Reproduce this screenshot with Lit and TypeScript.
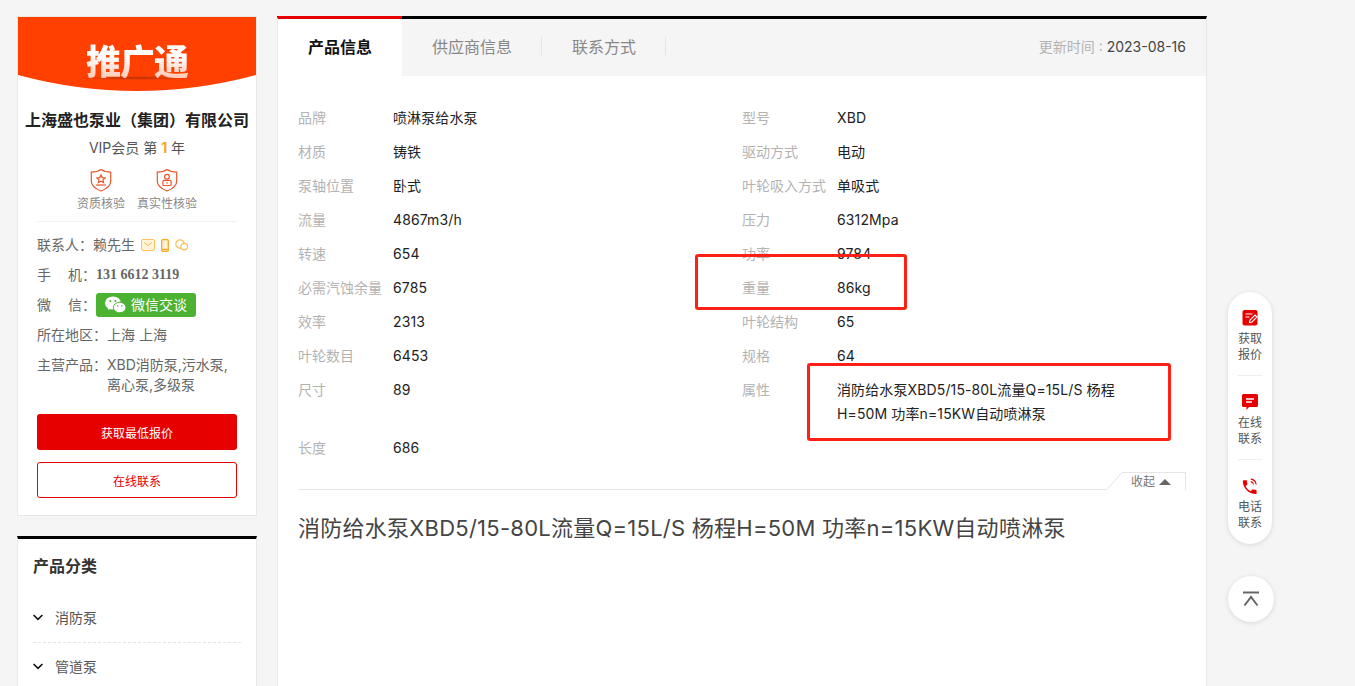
import { LitElement, html, css, svg } from "lit";
import { customElement } from "lit/decorators.js";

const specs: [string, string][] = [
  ["品牌", "喷淋泵给水泵"], ["型号", "XBD"],
  ["材质", "铸铁"], ["驱动方式", "电动"],
  ["泵轴位置", "卧式"], ["叶轮吸入方式", "单吸式"],
  ["流量", "4867m3/h"], ["压力", "6312Mpa"],
  ["转速", "654"], ["功率", "9784"],
  ["必需汽蚀余量", "6785"], ["重量", "86kg"],
  ["效率", "2313"], ["叶轮结构", "65"],
  ["叶轮数目", "6453"], ["规格", "64"],
  ["尺寸", "89"], ["属性", "消防给水泵XBD5/15-80L流量Q=15L/S 杨程 H=50M 功率n=15KW自动喷淋泵"],
  ["长度", "686"], ["", ""],
];

const shield = (inner: unknown) => html`<svg class="shield" viewBox="0 0 24 26" fill="none" stroke="#e8552a" stroke-width="1.3">
  <path d="M12 1.5 C15 3.6 19 4.4 22.6 4.4 V14 C22.6 19.5 17 23 12 25 C7 23 1.4 19.5 1.4 14 V4.4 C5 4.4 9 3.6 12 1.5Z"/>${inner}</svg>`;

@customElement("app-root")
export class AppRoot extends LitElement {
  static styles = css`
    :host { display: block; position: relative; width: 1355px; height: 686px; overflow: hidden; background: #f5f5f5;
      font-family: "Noto Sans CJK SC", "Inter", sans-serif; color: #333; font-size: 14px; }
    .page { display: flex; gap: 20px; padding: 16px 0 0 17px; align-items: flex-start; font-family: "Inter", "Noto Sans CJK SC", sans-serif; }
    .left { width: 240px; flex: none; }
    .card { box-sizing: border-box; background: #fff; border: 1px solid #e8e8e8; }
    .company { height: 500px; }
    .banner { height: 74px; background: radial-gradient(ellipse 60px 2px at 119px 61px, rgba(150,40,0,.65), transparent), #ff4000; clip-path: path("M0 0H238V58Q119 90 0 58Z"); display: flex; justify-content: center; }
    .logo { font-family: "Noto Sans CJK SC", sans-serif; font-size: 35px; font-weight: 900; line-height: 36px; margin-top: 25px; letter-spacing: -1px; height: 36px;
      background: linear-gradient(#fff 40%, #ffc9b5); -webkit-background-clip: text; background-clip: text; color: transparent; }
    .name { margin-top: 17px; text-align: center; font-size: 16px; font-weight: 700; line-height: 24px; color: #222; white-space: nowrap; }
    .vip { margin-top: 6px; text-align: center; line-height: 20px; color: #555; }
    .vip b { color: #f5a623; font-weight: 700; }
    .checks { display: flex; justify-content: center; gap: 12px; margin-top: 10px; }
    .check { display: flex; flex-direction: column; align-items: center; gap: 4px; font-size: 12px; line-height: 16px; color: #888; }
    .shield { width: 22px; height: 24px; display: block; }
    .info { margin: 9px 19px 0; border-top: 1px solid #f2f2f2; padding-top: 8px; }
    .row { display: flex; padding: 5px 0; line-height: 20px; color: #666; font-size: 14px; }
    .row .k { flex: none; width: 70px; }
    .row .k.short { width: 56px; }
    .row .k2 { flex: none; width: 59px; display: flex; justify-content: space-between; }
    .mini { display: flex; align-items: center; gap: 6px; margin-left: 6px; }
    .mobile { font-family: "Liberation Serif", serif; font-weight: 700; font-size: 14px; color: #666; }
    .wx { display: flex; align-items: center; width: 100px; height: 24px; margin: -2px 0; background: #4cb232; border-radius: 3px; color: #fff; gap: 5px; padding-left: 9px; box-sizing: border-box; font-size: 14px; }
    .btn { margin: 0 19px; height: 36px; box-sizing: border-box; border-radius: 3px; font-size: 12px; display: flex; align-items: center; justify-content: center; }
    .btn.solid { margin-top: 14px; background: #e60000; color: #fff; }
    .btn.line { margin-top: 12px; border: 1px solid #e60000; color: #e60000; background: #fff; }
    .cats { margin-top: 20px; border-top: 3px solid #000; padding: 15px 15px 0; height: 200px; }
    .cats h3 { margin: 0 0 16px; font-size: 16px; font-weight: 700; line-height: 24px; color: #333; }
    .cat { display: flex; align-items: center; gap: 12px; height: 46px; padding-bottom: 2px; border-bottom: 1px dashed #e5e5e5; color: #555; font-size: 14px; }
    .cat svg { width: 10px; height: 7px; flex: none; }
    .main { width: 930px; height: 680px; flex: none; background: #fff; border-top: 3px solid #000; border-left: 1px solid #e8e8e8; border-right: 1px solid #e8e8e8; box-sizing: border-box; }
    .tabs { display: flex; align-items: center; height: 57px; background: #f5f5f5; padding-right: 20px; font-size: 16px; color: #888; font-family: "Noto Sans CJK SC", sans-serif; }
    .tab { display: flex; align-items: center; padding-left: 30px; margin-top: -3px; }
    .tab span { display: block; line-height: 18px; padding-right: 29px; border-right: 1px solid #e5e5e5; }
    .tab.on { box-sizing: border-box; width: 124px; height: 60px; margin-top: -3px; padding-bottom: 4px; border-top: 3px solid #e60000; background: #fff; color: #111; font-weight: 700; }
    .tab.on span { border: 0; padding: 0; }
    .time { margin-left: auto; margin-top: -3px; font-size: 14px; color: #b3b3b3; font-family: "Inter", "Noto Sans CJK SC", sans-serif; }
    .time em { font-style: normal; color: #444; }
    .body { padding: 25px 20px 0; }
    .grid { display: grid; grid-template-columns: 444px 444px; }
    .spec { display: flex; padding: 5px 0; line-height: 24px; }
    .spec .l { flex: none; width: 95px; color: #b3b3b3; white-space: nowrap; }
    .spec .val { width: 300px; color: #222; font-size: 14px; letter-spacing: .12px; }
    .fold { display: flex; align-items: flex-end; height: 18px; margin-top: 7px; }
    .fold .rule { flex: 1; border-bottom: 1px solid #e5e5e5; }
    .fold svg.cut { width: 15px; height: 18px; display: block; flex: none; }
    .fold .tag { box-sizing: border-box; width: 64px; height: 18px; border-top: 1px solid #e5e5e5; border-right: 1px solid #e5e5e5; font-size: 12px; line-height: 17px; color: #777; padding-left: 9px; display: flex; align-items: center; gap: 4px; }
    .tri { width: 0; height: 0; border-left: 6px solid transparent; border-right: 6px solid transparent; border-bottom: 6px solid #666; }
    h1 { margin: 21px 0 0; font-size: 22px; font-weight: 400; line-height: 34px; color: #444; white-space: nowrap; letter-spacing: .25px; }
    .mark { position: absolute; box-sizing: border-box; border: 3px solid #ff2015; border-radius: 3px; pointer-events: none; }
    .m1 { left: 695px; top: 254px; width: 212px; height: 56px; }
    .m2 { left: 807px; top: 363px; width: 364px; height: 78px; }
    .float { position: absolute; left: 1228px; top: 292px; width: 44px; height: 252px; box-sizing: border-box; background: #fff; border-radius: 22px; box-shadow: 0 1px 5px rgba(0,0,0,.12); padding: 0 10px; font-size: 12px; line-height: 16px; color: #555; text-align: center; }
    .fitem { height: 84px; box-sizing: border-box; padding-top: 18px; border-bottom: 1px solid #eee; }
    .fitem:last-child { border: 0; }
    .fitem svg { display: block; width: 18px; height: 16px; margin: 0 auto 4px; }
    .top { position: absolute; left: 1228px; top: 576px; width: 46px; height: 46px; border-radius: 50%; background: #fff; box-shadow: 0 1px 5px rgba(0,0,0,.12); display: flex; align-items: center; justify-content: center; }
    .top svg { width: 18px; height: 16px; }
  `;

  private specTemplate([l, v]: [string, string]) {
    return html`<div class="spec"><div class="l">${l}</div><div class="val">${v}</div></div>`;
  }

  render() {
    return html`
      <div class="page">
        <div class="left">
          <div class="card company">
            <div class="banner"><div class="logo">推广通</div></div>
            <div class="name">上海盛也泵业（集团）有限公司</div>
            <div class="vip">VIP会员 第 <b>1</b> 年</div>
            <div class="checks">
              <div class="check">
                ${shield(svg`<path d="M12 7.5l1.4 2.9 3.1.4-2.3 2.1.6 3-2.8-1.5-2.8 1.500.6-3-2.3-2.1 3.1-.4Z"/><path d="M6.5 18.5h11"/>`)}
                资质核验
              </div>
              <div class="check">
                ${shield(svg`<circle cx="12" cy="9.5" r="2.6"/><rect x="7.500" y="13.5" width="9" height="5.5" rx="1"/><path d="M12 15.5v1.5"/>`)}
                真实性核验
              </div>
            </div>
            <div class="info">
              <div class="row"><div class="k short">联系人：</div><div>赖先生</div>
                <div class="mini">
                  <svg width="14" height="12" viewBox="0 0 14 12" fill="#fff3d9" stroke="#fdc05a"><rect x=".5" y=".5" width="13" height="11" rx="1.5"/><path d="M3 3.5l4 3 4-3" fill="none"/></svg>
                  <svg width="8" height="13" viewBox="0 0 8 13" fill="#fff3d9" stroke="#f9a825" stroke-width="1.3"><rect x=".7" y=".7" width="6.6" height="11.6" rx="1"/><path d="M1 10.5h6" /></svg>
                  <svg width="13" height="12" viewBox="0 0 13 12" fill="none" stroke="#fdc05a" stroke-width="1.2"><circle cx="5" cy="5" r="4.2"/><circle cx="9.2" cy="7.6" r="3.3" fill="#fff"/></svg>
                </div>
              </div>
              <div class="row"><div class="k2"><span>手</span><span>机：</span></div><div class="mobile">131 6612 3119</div></div>
              <div class="row"><div class="k2"><span>微</span><span>信：</span></div>
                <div class="wx">
                  <svg width="21" height="18" viewBox="0 0 21 18" fill="#fff"><ellipse cx="8" cy="7" rx="8" ry="6.6"/><path d="M3.5 11l-.7 3 3.4-1.8Z"/><ellipse cx="14.7" cy="11.5" rx="6.3" ry="5.3" stroke="#4cb232"/><circle cx="5.3" cy="5" r="1" fill="#4cb232"/><circle cx="10.4" cy="5" r="1" fill="#4cb232"/><circle cx="12.6" cy="10" r=".8" fill="#4cb232"/><circle cx="16.8" cy="10" r=".8" fill="#4cb232"/></svg>
                  微信交谈
                </div>
              </div>
              <div class="row"><div class="k">所在地区：</div><div>上海 上海</div></div>
              <div class="row"><div class="k">主营产品：</div><div>XBD消防泵,污水泵,<br />离心泵,多级泵</div></div>
            </div>
            <div class="btn solid">获取最低报价</div>
            <div class="btn line">在线联系</div>
          </div>
          <div class="card cats">
            <h3>产品分类</h3>
            ${["消防泵", "管道泵"].map((c) => html`<div class="cat">
              <svg viewBox="0 0 10 7" fill="none" stroke="#111" stroke-width="1.6"><path d="M.6 1l4.4 4.4L9.4 1"/></svg>${c}</div>`)}
          </div>
        </div>
        <div class="main">
          <div class="tabs">
            <div class="tab on"><span>产品信息</span></div>
            <div class="tab"><span>供应商信息</span></div>
            <div class="tab"><span>联系方式</span></div>
            <div class="time">更新时间 : <em>2023-08-16</em></div>
          </div>
          <div class="body">
            <div class="grid">${specs.map((s) => this.specTemplate(s))}</div>
            <div class="fold">
              <div class="rule"></div>
              <svg class="cut" viewBox="0 0 15 18" fill="none" stroke="#e5e5e5"><path d="M0 17.5L15 .5"/></svg>
              <div class="tag">收起<i class="tri"></i></div>
            </div>
            <h1>消防给水泵XBD5/15-80L流量Q=15L/S 杨程H=50M 功率n=15KW自动喷淋泵</h1>
          </div>
        </div>
      </div>
      <div class="mark m1"></div>
      <div class="mark m2"></div>
      <div class="float">
        <div class="fitem">
          <svg viewBox="0 0 18 16"><rect x="1.500" y="0" width="15" height="15.500" rx="2" fill="#e60000"/><path d="M4.500 4h7M4.500 7h4" stroke="#fff" stroke-width="1.2"/><path d="M8.500 12.500l.5-2.500 5-5 2 2-5 5Z" fill="#e60000" stroke="#fff" stroke-width="1.100"/></svg>
          获取<br />报价
        </div>
        <div class="fitem">
          <svg viewBox="0 0 18 16"><path d="M2.500 0h13A1.500 1.500 0 0 1 17 1.500v10a1.500 1.500 0 0 1-1.500 1.500H8l-2.500 3v-3h-3A1.500 1.500 0 0 1 1 11.500v-10A1.500 1.500 0 0 1 2.500 0Z" fill="#e60000"/><path d="M5 5h8M5 8h6" stroke="#fff" stroke-width="1.300"/></svg>
          在线<br />联系
        </div>
        <div class="fitem">
          <svg viewBox="0 0 24 22" fill="#e60000"><path transform="translate(-1 0) scale(1.050)" d="M6.620 10.790c1.440 2.830 3.760 5.140 6.590 6.590l2.200-2.200c.27-.27.67-.36 1.020-.24 1.120.37 2.330.57 3.570.57.55 0 1 .45 1 1V20c0 .55-.45 1-1 1-9.390 0-17-7.610-17-17 0-.55.45-1 1-1h3.500c.55 0 1 .45 1 1 0 1.250.2 2.450.57 3.570.11.350.03.740-.25 1.020l-2.200 2.200z"/><path d="M13 1.500c4 .4 7 3.400 7.500 7.500M13 5c2 .3 3.500 1.800 3.800 4" fill="none" stroke="#e60000" stroke-width="1.500"/></svg>
          电话<br />联系
        </div>
      </div>
      <div class="top">
        <svg viewBox="0 0 18 16" fill="none" stroke="#666" stroke-width="2"><path d="M1 1.500h16M2.500 14.500L9 6l6.500 8.500"/></svg>
      </div>
    `;
  }
}
